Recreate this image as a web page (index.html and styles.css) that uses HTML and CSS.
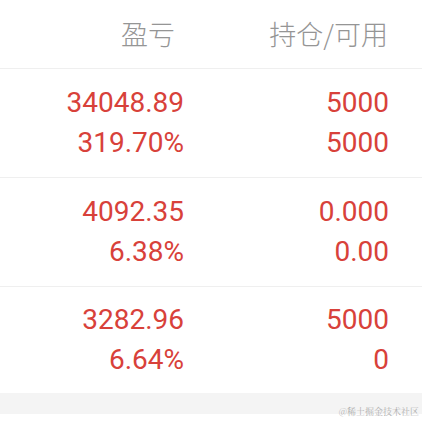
FILE: index.html
```html
<!DOCTYPE html>
<html lang="zh">
<head>
<meta charset="utf-8">
<link rel="stylesheet" href="styles.css">
</head>
<body>
<div class="table">
  <div class="row head">
    <div class="col c1"><span class="h1">盈亏</span></div>
    <div class="col c2">持仓/可用</div>
  </div>
  <div class="row">
    <div class="col c1"><div>34048.89</div><div>319.70%</div></div>
    <div class="col c2"><div>5000</div><div>5000</div></div>
  </div>
  <div class="row">
    <div class="col c1"><div>4092.35</div><div>6.38%</div></div>
    <div class="col c2"><div>0.000</div><div>0.00</div></div>
  </div>
  <div class="row last">
    <div class="col c1"><div>3282.96</div><div>6.64%</div></div>
    <div class="col c2"><div>5000</div><div>0</div></div>
  </div>
</div>
<div class="band"></div>
<div class="mark">@稀土掘金技术社区</div>
</body>
</html>
```
FILE: styles.css
```css
html, body {
  margin: 0;
  padding: 0;
  background: #ffffff;
}
body {
  position: relative;
  width: 422px;
  height: 422px;
  overflow: hidden;
}
.table {
  display: flex;
  flex-direction: column;
}
.row {
  display: flex;
  align-items: center;
  height: 108px;
  border-bottom: 1px solid #efefef;
  font-family: Roboto, "Liberation Sans", sans-serif;
  font-size: 28px;
  line-height: 40px;
  color: #d8413a;
}
.row.last {
  border-bottom: none;
  height: 106px;
}
.row.head {
  height: 68px;
  font-family: "Noto Sans CJK SC", sans-serif;
  font-size: 27px;
  font-weight: 300;
  color: #959595;
}
.col {
  text-align: right;
}
.c1 {
  width: 184px;
}
.c2 {
  flex: 1;
  padding-right: 33px;
}
.head .c1 {
  padding-right: 9px;
  width: 175px;
}
.head .c2 {
  padding-right: 34px;
}
.band {
  height: 21px;
  background: #f4f4f4;
}
.mark {
  position: absolute;
  right: 3px;
  top: 405px;
  font-family: "Noto Serif CJK SC", "Noto Sans CJK SC", serif;
  font-size: 9px;
  color: #b0b0b0;
}
```
